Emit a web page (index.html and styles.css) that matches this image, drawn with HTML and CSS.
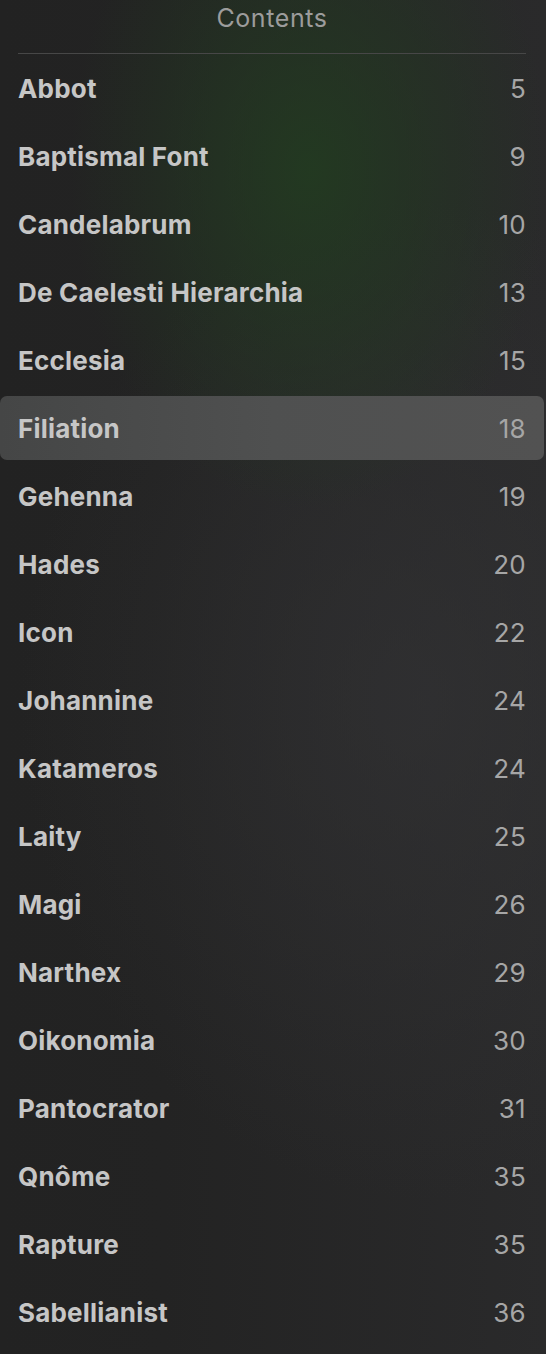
FILE: index.html
```html
<!DOCTYPE html>
<html lang="en">
<head>
    <meta charset="UTF-8">
    <meta name="viewport" content="width=device-width, initial-scale=1.0">
    <title>Contents</title>
    <link rel="stylesheet" href="styles.css">
</head>
<body>
    <div class="panel">
        <div class="header">Contents</div>
        <div class="divider"></div>
        <ul class="toc">
            <li class="row"><span class="title">Abbot</span><span class="page">5</span></li>
            <li class="row"><span class="title">Baptismal Font</span><span class="page">9</span></li>
            <li class="row"><span class="title">Candelabrum</span><span class="page">10</span></li>
            <li class="row"><span class="title">De Caelesti Hierarchia</span><span class="page">13</span></li>
            <li class="row"><span class="title">Ecclesia</span><span class="page">15</span></li>
            <li class="row active"><span class="title">Filiation</span><span class="page">18</span></li>
            <li class="row"><span class="title">Gehenna</span><span class="page">19</span></li>
            <li class="row"><span class="title">Hades</span><span class="page">20</span></li>
            <li class="row"><span class="title">Icon</span><span class="page">22</span></li>
            <li class="row"><span class="title">Johannine</span><span class="page">24</span></li>
            <li class="row"><span class="title">Katameros</span><span class="page">24</span></li>
            <li class="row"><span class="title">Laity</span><span class="page">25</span></li>
            <li class="row"><span class="title">Magi</span><span class="page">26</span></li>
            <li class="row"><span class="title">Narthex</span><span class="page">29</span></li>
            <li class="row"><span class="title">Oikonomia</span><span class="page">30</span></li>
            <li class="row"><span class="title">Pantocrator</span><span class="page">31</span></li>
            <li class="row"><span class="title">Qnôme</span><span class="page">35</span></li>
            <li class="row"><span class="title">Rapture</span><span class="page">35</span></li>
            <li class="row"><span class="title">Sabellianist</span><span class="page">36</span></li>
        </ul>
    </div>
</body>
</html>
```

FILE: styles.css
```css
html, body {
    margin: 0;
    height: 100%;
}
body {
    font-family: Inter, "Noto Sans", sans-serif;
    background-color: #242424;
    background-image:
        radial-gradient(ellipse 240px 340px at 310px 170px, rgba(34, 62, 32, 0.8), rgba(34, 62, 32, 0) 100%),
        radial-gradient(ellipse 400px 500px at 420px 700px, rgba(52, 52, 54, 0.6), rgba(52, 52, 54, 0) 100%),
        linear-gradient(to right, #222222 0%, #232323 30%, #2a2a2b 100%);
    min-height: 1354px;
}
.panel {
    width: 544px;
}
.header {
    height: 36px;
    line-height: 36px;
    text-align: center;
    font-size: 25px;
    color: #9c9c9c;
    letter-spacing: 0.6px;
    margin-bottom: 17px;
}
.divider {
    height: 1px;
    margin: 0 18px;
    background: #474747;
}
.toc {
    list-style: none;
    margin: 0;
    padding: 2px 0 0 0;
    display: flex;
    flex-direction: column;
    gap: 4px;
}
.row {
    height: 64px;
    display: flex;
    align-items: center;
    justify-content: space-between;
    padding: 0 18px;
    border-radius: 7px;
    font-size: 26px;
}
.row.active {
    background: linear-gradient(to right, #454646, #4f5050 50%, #525252);
}
.title {
    font-weight: 700;
    color: #c6c6c6;
    letter-spacing: 0.2px;
}
.page {
    color: #a6a6a6;
    font-weight: 400;
    letter-spacing: 0.3px;
}
```
